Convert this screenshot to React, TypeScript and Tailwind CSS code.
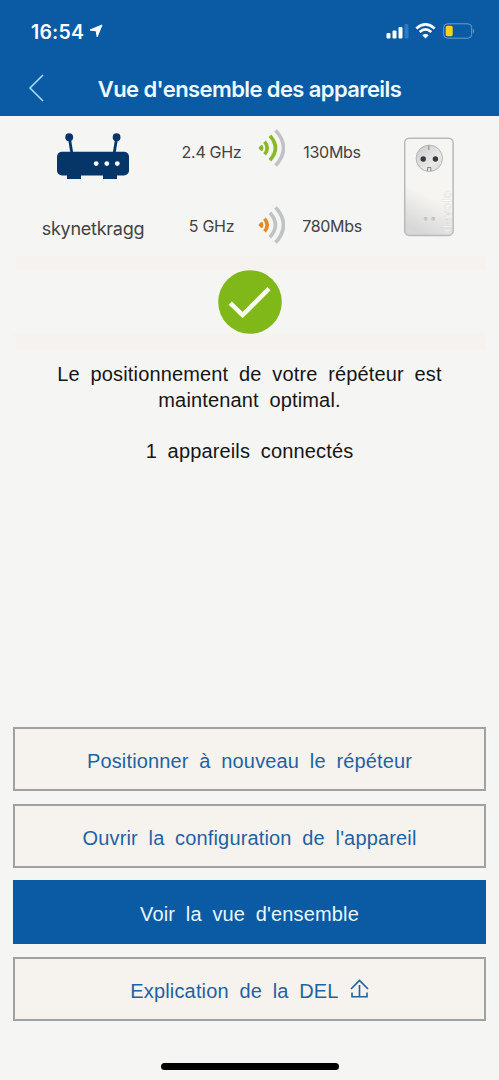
import clsx from "clsx";
import React from "react";

const WAVES = [
  "M6.6 12.6Q11.8 19 6.6 25.4",
  "M11.9 6.8Q23 19 11.9 31.2",
  "M17.6 1.4Q33.4 19 17.6 36.6",
];

interface SignalIconProps {
  level: number;
  color: string;
}

function SignalIcon(props: SignalIconProps) {
  return (
    <svg className="h-[38px] w-[27px]" viewBox="0 0 27 38" fill="none">
      <path
        d="M1.8 19L3.7 17.2Q4.8 19 3.7 20.8Z"
        fill={props.color}
        stroke={props.color}
        strokeWidth="2.4"
        strokeLinejoin="round"
      />
      {WAVES.map((d, i) => (
        <path
          key={d}
          d={d}
          stroke={i < props.level ? props.color : "#bfc3c6"}
          strokeWidth="3.6"
        />
      ))}
    </svg>
  );
}

function StatusBar() {
  return (
    <div className="flex h-[62px] items-center justify-between pl-[31px] pr-[24px] text-white">
      <div className="flex items-center gap-[5px]">
        <span className="text-[19.5px] font-semibold leading-6 pt-px tracking-[0.2px]">
          16:54
        </span>
        <svg className="h-[14px] w-[14px]" viewBox="0 0 14 14">
          <path
            d="M13 1L8.2 12.8L7.2 6.9L1 6Z"
            fill="currentColor"
            stroke="currentColor"
            strokeLinejoin="round"
          />
        </svg>
      </div>
      <div className="flex items-center gap-[6px]">
        <svg className="h-[16px] w-[23px]" viewBox="0 0 23 16" fill="currentColor">
          <rect x="0.5" y="10" width="4" height="5.5" rx="1" />
          <rect x="6.5" y="7.5" width="4" height="8" rx="1" />
          <rect x="12.5" y="4" width="4" height="11.5" rx="1" />
          <rect x="18.5" y="1" width="4" height="14.5" rx="1" fill="#2d7cbd" />
        </svg>
        <svg className="h-[16px] w-[21px]" viewBox="0 0 21 16" fill="none">
          <path
            d="M1.3 5.4Q10.5 -2.6 19.7 5.4M4.7 8.9Q10.5 4 16.3 8.9"
            stroke="currentColor"
            strokeWidth="2.6"
          />
          <path
            d="M10.5 15.4L7.3 12.2Q10.5 9.7 13.7 12.2Z"
            fill="currentColor"
          />
        </svg>
        <svg className="h-[16px] w-[33px]" viewBox="0 0 33 16" fill="none">
          <rect x="1.7" y="0.8" width="28" height="14.4" rx="3.8" stroke="#6b9fc6" />
          <rect x="3.7" y="2.7" width="7" height="10.6" rx="1.8" fill="#fbd01c" />
          <path d="M31 5.5Q33.2 8 31 10.5Z" fill="#6b9fc6" />
        </svg>
      </div>
    </div>
  );
}

function Header() {
  return (
    <header className="h-[116px] bg-[#0b5aa4]">
      <StatusBar />
      <div className="relative flex h-[53px] items-center justify-center">
        <svg
          className="absolute left-[28px] top-[12px] h-[28px] w-[17px]"
          viewBox="0 0 17 28"
          fill="none"
        >
          <path d="M15 1L2 14L15 27" stroke="#a5dcf8" strokeWidth="1.6" />
        </svg>
        <h1 className="text-[22px] font-semibold leading-7 tracking-[-0.6px] text-[#edfaff]">
          Vue d'ensemble des appareils
        </h1>
      </div>
    </header>
  );
}

function RouterIcon() {
  return (
    <svg className="h-[47px] w-[74px]" viewBox="0 0 74 47" fill="#053667">
      <path d="M13.2 4L15.8 20M60.8 4L58.2 20" stroke="#053667" strokeWidth="2.8" />
      <circle cx="13.2" cy="4.2" r="3.9" />
      <circle cx="60.6" cy="4.2" r="3.9" />
      <rect x="1" y="18.8" width="72" height="23.6" rx="5" />
      <path d="M11 40H25V46H11ZM47 40H61V46H47Z" />
      <g fill="#fff">
        <circle cx="40.2" cy="30.6" r="2.4" />
        <circle cx="50.8" cy="30.6" r="2.4" />
        <circle cx="61.3" cy="30.6" r="2.4" />
      </g>
    </svg>
  );
}

function RepeaterIcon() {
  return (
    <svg className="h-[100px] w-[52px]" viewBox="0 0 52 100">
      <defs>
        <linearGradient id="case" x1="0.7" y1="0" x2="0.45" y2="1">
          <stop offset="0.6" stopColor="#f7f5f1" />
          <stop offset="1" stopColor="#d6d7d7" />
        </linearGradient>
        <linearGradient id="socket" x1="0" y1="0" x2="1" y2="1">
          <stop stopColor="#c8cacb" />
          <stop offset="0.65" stopColor="#e9e9e7" />
          <stop offset="1" stopColor="#d5d6d6" />
        </linearGradient>
      </defs>
      <rect
        x="1.7"
        y="1.2"
        width="48.4"
        height="97.2"
        rx="4.5"
        fill="url(#case)"
        stroke="#b7babb"
        strokeWidth="1.5"
      />
      <circle cx="26.3" cy="21.3" r="13.2" fill="url(#socket)" stroke="#b3b6b7" />
      <circle cx="20.2" cy="22" r="2.7" fill="#363a3c" />
      <circle cx="32.4" cy="22" r="2.7" fill="#363a3c" />
      <path d="M25.8 8.7V13M24.5 34V30.5H27.8V34" stroke="#808485" fill="none" />
      <circle cx="22.6" cy="81.8" r="2" fill="#c4c6c7" />
      <circle cx="30.2" cy="81.8" r="2" fill="#c4c6c7" />
      <text
        x="0"
        y="0"
        transform="translate(48 95) rotate(-90)"
        className="font-['Lato',sans-serif] text-[12.5px] tracking-[0.8px]"
        fill="#fcfcfa"
        stroke="#c9cccd"
        strokeWidth="0.3"
      >
        devolo
      </text>
    </svg>
  );
}

interface BandRowProps {
  band: string;
  speed: string;
  level: number;
  color: string;
  className?: string;
}

function BandRow(props: BandRowProps) {
  return (
    <div className="grid h-[38px] grid-cols-[75px_27px_1fr] items-center text-[16px] tracking-[-0.3px] text-[#414344]">
      <span
        className={clsx(
          "justify-self-center pr-[18px] whitespace-nowrap",
          props.className
        )}
      >
        {props.band}
      </span>
      <SignalIcon level={props.level} color={props.color} />
      <span className={clsx("justify-self-center pl-[9px]", props.className)}>
        {props.speed}
      </span>
    </div>
  );
}

function ConnectionOverview() {
  return (
    <section className="flex h-[140px]">
      <div className="flex w-[183px] flex-col items-center pt-[17px] pl-[3px]">
        <RouterIcon />
        <span className="mt-[37px] text-[18px] leading-6 tracking-[-0.25px] text-[#414344]">
          skynetkragg
        </span>
      </div>
      <div className="flex w-[187px] flex-col gap-[39px] pt-[13px]">
        <BandRow
          band="2.4 GHz"
          speed="130Mbs"
          level={2}
          color="#88b927"
          className="pt-[7px]"
        />
        <BandRow
          band="5 GHz"
          speed="780Mbs"
          level={1}
          color="#e98720"
          className="pt-px"
        />
      </div>
      <div className="pt-[21px] pl-[33px]">
        <RepeaterIcon />
      </div>
    </section>
  );
}

function PlacementResult() {
  return (
    <section className="mx-[14px]">
      <div className="h-[14px] bg-[#f6f3ef]" />
      <div className="flex h-[63px] justify-center">
        <svg className="h-[64px] w-[64px]" viewBox="0 0 64 64">
          <circle cx="32" cy="32" r="31.8" fill="#80b81a" />
          <path
            d="M12.3 33.2L24.6 45.1L51 18.6"
            fill="none"
            stroke="#f8fbf1"
            strokeWidth="4.6"
          />
        </svg>
      </div>
      <div className="h-[17px] bg-[#f6f3ef]" />
    </section>
  );
}

interface ActionButtonProps {
  primary?: boolean;
  children: React.ReactNode;
}

function ActionButton(props: ActionButtonProps) {
  return (
    <button
      className={clsx(
        "flex h-16 items-center justify-center border-2 pt-1 tracking-[0.15px] [word-spacing:5px]",
        props.primary
          ? "border-[#0b5aa4] bg-[#0b5aa4] text-[#e6f8ff]"
          : "border-[#a0a2a1] bg-[#f6f3ef] text-[#1e62a1]"
      )}
    >
      {props.children}
    </button>
  );
}

function Actions() {
  return (
    <div className="mt-auto mx-[13px] mb-[59px] flex flex-col gap-[12.7px] font-['Liberation_Sans',Arial,sans-serif] text-[20px]">
      <ActionButton>Positionner à nouveau le répéteur</ActionButton>
      <ActionButton>Ouvrir la configuration de l'appareil</ActionButton>
      <ActionButton primary>Voir la vue d'ensemble</ActionButton>
      <ActionButton>
        Explication de la DEL
        <svg
          className="mb-[5px] ml-[11px] h-[19px] w-[19px]"
          viewBox="0 0 19 19"
          fill="none"
        >
          <path
            d="M1 10L9.5 1.5L18 10M9.5 6V17.2M2 13.5V17.8H17V13.5"
            stroke="currentColor"
            strokeWidth="1.6"
          />
        </svg>
      </ActionButton>
    </div>
  );
}

export default function App() {
  return (
    <div className="relative flex h-[1080px] w-[499px] flex-col bg-[#f5f5f3] font-['Inter',sans-serif]">
      <Header />
      <ConnectionOverview />
      <PlacementResult />
      <div className="mt-[12px] text-center font-['Liberation_Sans',Arial,sans-serif] text-[20px] leading-[25.7px] tracking-[0.15px] text-[#151515] [word-spacing:5px]">
        <p>
          Le positionnement de votre répéteur est
          <br />
          maintenant optimal.
        </p>
        <p className="mt-[25.7px]">1 appareils connectés</p>
      </div>
      <Actions />
      <div className="absolute bottom-[10px] left-[161px] h-[7px] w-[178px] rounded-full bg-black" />
    </div>
  );
}
